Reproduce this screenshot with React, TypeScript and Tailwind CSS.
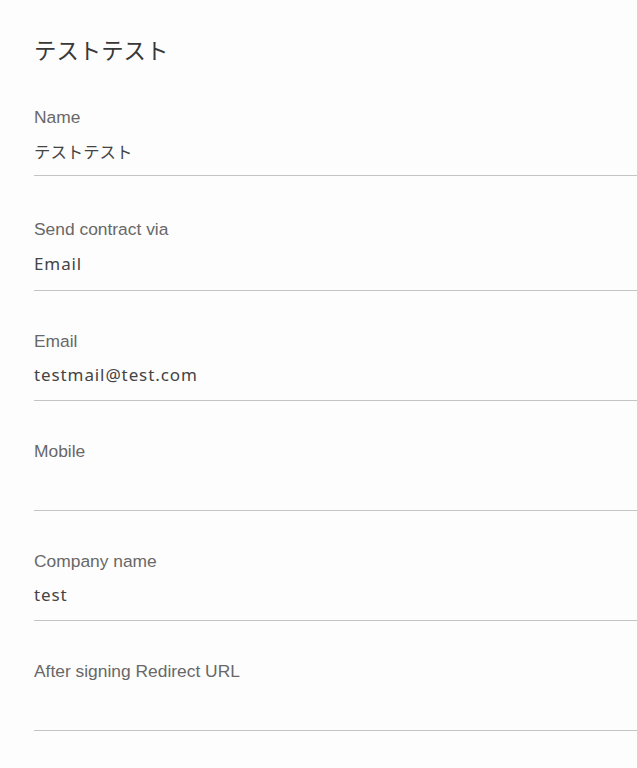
type Field = {
  label: string;
  value?: string;
  gap: string;
  height: string;
  jp?: boolean;
};

const fields: Field[] = [
  { label: "Name", value: "テストテスト", gap: "mt-[43px]", height: "h-[49px]", jp: true },
  { label: "Send contract via", value: "Email", gap: "mt-[43px]", height: "h-[52px]" },
  { label: "Email", value: "testmail@test.com", gap: "mt-[40px]", height: "h-[50px]" },
  { label: "Mobile", gap: "mt-[40px]", height: "h-[50px]" },
  { label: "Company name", value: "test", gap: "mt-[40px]", height: "h-[50px]" },
  { label: "After signing Redirect URL", gap: "mt-[40px]", height: "h-[50px]" },
];

export default function App() {
  return (
    <div className="min-h-[768px] w-full overflow-hidden bg-[#fdfdfd] pl-[34px] pt-[34px]">
      <h1 className="font-['Noto_Sans_CJK_JP','Noto_Sans',sans-serif] text-[22.4px] leading-[30px] font-normal text-[#383838]">
        テストテスト
      </h1>

      {fields.map((f) => (
        <div key={f.label} className={f.gap}>
          <label className="block font-['Liberation_Sans',Arial,sans-serif] text-[17.4px] leading-5 text-[#686868]">
            {f.label}
          </label>
          <div
            className={
              f.jp
                ? `${f.height} flex items-center border-b border-[#c4c4c4] font-['Noto_Sans_CJK_JP','Noto_Sans',sans-serif] text-[16.4px] text-[#444]`
                : `${f.height} flex items-center pb-px border-b border-[#c4c4c4] font-['Noto_Sans','Open_Sans',sans-serif] text-[17px] tracking-[0.9px] text-[#444]`
            }
          >
            {f.value}
          </div>
        </div>
      ))}
    </div>
  );
}
